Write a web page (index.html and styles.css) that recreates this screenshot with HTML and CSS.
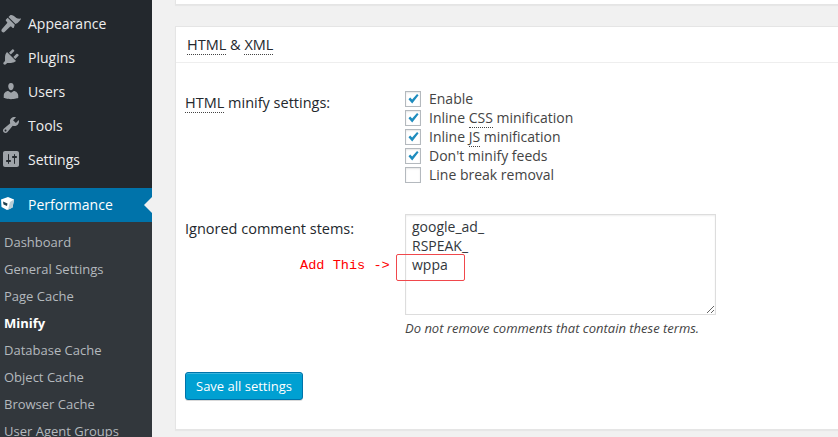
FILE: index.html
```html
<!DOCTYPE html>
<html lang="en">
<head>
  <meta charset="utf-8">
  <title>Minify - Performance</title>
  <link rel="stylesheet" href="styles.css">
</head>
<body>
  <div class="page">
    <nav class="sidebar">
      <ul class="menu">
        <li class="menu-item">
          <svg class="menu-icon" viewBox="0 0 20 20"><path d="M14.500 11 7.500 4l1.500-1.500c.5-.6 2.300-.5 3.500.3 1.200.8 1.500 1.300 2.900 2.100 1.200.6 2.400 1 4.600.6-.1.7-.7 1.600-1.300 2.300-.8 1-1.500 1.500-2.200 2.200zM13.800 11.800 6.700 4.700 5 6.500c-.4.4-.4 1 0 1.400l1 1c.4.4.4 1 0 1.400L1 16c-.8.800-.8 2 0 2.800s2 .8 2.800 0L9 13.800c.4-.4 1-.4 1.400 0l1 1c.4.400 1 .4 1.400 0z"/></svg>
          <span>Appearance</span>
        </li>
        <li class="menu-item">
          <svg class="menu-icon" viewBox="0 0 20 20"><path d="M13.110 4.360 9.870 7.600 8 5.730l3.240-3.240c.35-.34 1.050-.2 1.560.32.52.51.66 1.210.31 1.550zm-8 1.770.91-1.120 9.010 9.010-1.190.84c-.71.71-2.630 1.160-3.820 1.160H6.140L4.900 17.260c-.59.59-1.540.59-2.120 0-.59-.58-.59-1.530 0-2.120l1.240-1.240v-3.880c0-1.130.4-3.190 1.090-3.890zm7.260 3.970 3.240-3.240c.34-.35 1.040-.21 1.550.31.52.51.66 1.210.31 1.550l-3.240 3.250z"/></svg>
          <span>Plugins</span>
        </li>
        <li class="menu-item">
          <svg class="menu-icon" viewBox="0 0 20 20"><path d="M10 9.250c-2.270 0-2.730-3.440-2.730-3.440C7 4.020 7.820 2 9.970 2c2.160 0 2.980 2.020 2.710 3.810 0 0-.41 3.440-2.680 3.440zm0 2.570L12.720 10c2.390 0 4.520 2.330 4.520 4.530v2.490s-3.650 1.130-7.240 1.130c-3.650 0-7.240-1.130-7.240-1.130v-2.490c0-2.250 1.940-4.480 4.470-4.480z"/></svg>
          <span>Users</span>
        </li>
        <li class="menu-item">
          <svg class="menu-icon" viewBox="0 0 20 20"><path d="M16.680 9.770c-1.340 1.340-3.300 1.670-4.950.99l-5.410 6.520c-.99.99-2.590.99-3.580 0s-.99-2.590 0-3.570l6.520-5.420c-.68-1.650-.35-3.610.99-4.950 1.280-1.280 3.120-1.620 4.720-1.060l-2.890 2.890 2.820 2.820 2.860-2.870c.53 1.580.18 3.390-1.080 4.650zM3.810 16.210c.4.39 1.040.39 1.430 0 .4-.4.4-1.040 0-1.430-.39-.4-1.030-.4-1.430 0-.39.39-.39 1.030 0 1.430z"/></svg>
          <span>Tools</span>
        </li>
        <li class="menu-item">
          <svg class="menu-icon" viewBox="0 0 20 20"><path d="M18 16V4c0-1.100-.9-2-2-2H4c-1.100 0-2 .9-2 2v12c0 1.100.9 2 2 2h12c1.100 0 2-.9 2-2zM8 11h1c.55 0 1 .45 1 1s-.45 1-1 1H8v1.500c0 .28-.22.5-.5.5s-.5-.22-.5-.5V13H6c-.55 0-1-.45-1-1s.45-1 1-1h1V5.500c0-.28.22-.5.5-.5s.5.22.5.5V11zm5-2h-1c-.55 0-1-.45-1-1s.45-1 1-1h1V5.500c0-.28.22-.5.5-.5s.5.22.5.5V7h1c.55 0 1 .45 1 1s-.45 1-1 1h-1v5.500c0 .28-.22.5-.5.5s-.5-.22-.5-.5V9z"/></svg>
          <span>Settings</span>
        </li>
        <li class="menu-item menu-current">
          <svg class="cube-icon" viewBox="0 0 15 15"><path class="cube-white" d="M1 3.500 8 1l6 2.500-1.500 8L7 14 1.500 11z"/><path class="cube-shade" d="M10 6 14 3.500l-1.500 8L8 14z"/><path class="cube-dark" d="M3 5.500 7.500 7.500 7 10 3.500 8.500z"/></svg>
          <span>Performance</span>
        </li>
      </ul>
      <ul class="submenu">
        <li>Dashboard</li>
        <li>General Settings</li>
        <li>Page Cache</li>
        <li class="submenu-current">Minify</li>
        <li>Database Cache</li>
        <li>Object Cache</li>
        <li>Browser Cache</li>
        <li>User Agent Groups</li>
      </ul>
    </nav>

    <main class="content">
      <div class="card card-top"></div>
      <section class="card">
        <h3 class="card-title"><abbr>HTML</abbr> &amp; <abbr>XML</abbr></h3>
        <div class="card-body">
          <div class="row row-settings">
            <div class="row-label"><abbr>HTML</abbr> minify settings:</div>
            <div class="checks">
              <label class="check"><span class="box"><svg viewBox="0 0 16 16"><path d="M2.800 8.200 4.800 6.400 7 8.600 12.600 2.200 14.400 3.800 7.100 13z"/></svg></span>Enable</label>
              <label class="check"><span class="box"><svg viewBox="0 0 16 16"><path d="M2.800 8.200 4.800 6.400 7 8.600 12.600 2.200 14.400 3.800 7.100 13z"/></svg></span><span>Inline <abbr>CSS</abbr> minification</span></label>
              <label class="check"><span class="box"><svg viewBox="0 0 16 16"><path d="M2.800 8.200 4.800 6.400 7 8.600 12.600 2.200 14.400 3.800 7.100 13z"/></svg></span><span>Inline <abbr>JS</abbr> minification</span></label>
              <label class="check"><span class="box"><svg viewBox="0 0 16 16"><path d="M2.800 8.200 4.800 6.400 7 8.600 12.600 2.200 14.400 3.800 7.100 13z"/></svg></span>Don't minify feeds</label>
              <label class="check"><span class="box"></span>Line break removal</label>
            </div>
          </div>
          <div class="row row-stems">
            <div class="row-label">Ignored comment stems:</div>
            <div class="stems">
              <textarea class="stems-input" spellcheck="false">google_ad_
RSPEAK_
wppa</textarea>
              <div class="note-box"></div>
              <div class="note-text">Add This -&gt;</div>
              <p class="help">Do not remove comments that contain these terms.</p>
            </div>
          </div>
          <button class="save-btn">Save all settings</button>
        </div>
      </section>
    </main>
  </div>
</body>
</html>
```

FILE: styles.css
```css
html, body {
    margin: 0;
    height: 437px;
    overflow: hidden;
}
body {
    background: #f1f1f1;
    color: #444;
    font-family: "Open Sans", sans-serif;
    font-size: 14px;
}
ul {
    list-style: none;
    margin: 0;
    padding: 0;
}
abbr {
    border-bottom: 1px dotted #444;
}

.page {
    display: flex;
    height: 437px;
}

/* admin menu */
.sidebar {
    width: 152px;
    flex-shrink: 0;
    background: #23282d;
    overflow: hidden;
}
.menu {
    padding-top: 6px;
}
.menu-item {
    display: flex;
    align-items: center;
    height: 34px;
    color: #eee;
    padding-left: 1px;
}
.menu-item span {
    margin-left: 7px;
}
.menu-icon {
    width: 20px;
    height: 20px;
    fill: #9ea3a8;
}
.menu-current {
    position: relative;
    margin-top: 12px;
    padding-left: 0;
    background: #0073aa;
    color: #fff;
}
.menu-current span {
    margin-left: 13px;
    margin-bottom: 2px;
}
.menu-current::after {
    content: "";
    position: absolute;
    right: 0;
    top: 9px;
    border: 8px solid transparent;
    border-left-width: 0;
    border-right-color: #f1f1f1;
}
.cube-icon {
    width: 15px;
    height: 15px;
    margin-bottom: 3px;
}
.cube-white {
    fill: #fff;
}
.cube-shade {
    fill: #b9cdd6;
}
.cube-dark {
    fill: #23424f;
}
.submenu {
    background: #32373c;
    padding-top: 7px;
    height: 220px;
    color: #b4b9be;
    font-size: 13px;
}
.submenu li {
    height: 27px;
    line-height: 27px;
    padding-left: 4px;
    white-space: nowrap;
}
.submenu .submenu-current {
    color: #fff;
    font-weight: 700;
}

/* content */
.content {
    flex: 1;
    padding-left: 23px;
    min-width: 0;
}
.card {
    background: #fff;
    border: 1px solid #e5e5e5;
    border-right: 0;
    box-shadow: 0 1px 1px rgba(0, 0, 0, .04);
}
.card-top {
    height: 4px;
    border-top: 0;
    margin-bottom: 21px;
}
.card-title {
    margin: 0;
    height: 35px;
    line-height: 35px;
    padding-left: 11px;
    border-bottom: 1px solid #eee;
    font-size: 14.5px;
    font-weight: 400;
    color: #23282d;
}
.card-body {
    padding: 26px 9px 29px;
}
.row {
    display: grid;
    grid-template-columns: 220px 1fr;
}
.row-label {
    color: #23282d;
    font-size: 14.5px;
    padding-top: 4px;
}
.row-settings {
    height: 125px;
}
.row-stems {
    height: 158px;
}
.row-stems .row-label {
    padding-top: 5px;
}
.check {
    display: flex;
    align-items: center;
    height: 19px;
}
.box {
    display: block;
    box-sizing: border-box;
    width: 16px;
    height: 16px;
    margin-right: 8px;
    background: #fff;
    border: 1px solid #b4b9be;
    box-shadow: inset 0 1px 2px rgba(0, 0, 0, .1);
}
.box svg {
    display: block;
    width: 14px;
    height: 14px;
    fill: #1e8cbe;
}
.stems {
    position: relative;
}
.stems-input {
    display: block;
    box-sizing: border-box;
    width: 311px;
    height: 101px;
    margin: 0;
    padding: 2px 6px;
    border: 1px solid #ddd;
    box-shadow: inset 0 1px 2px rgba(0, 0, 0, .07);
    color: #32373c;
    font-family: "Open Sans", sans-serif;
    font-size: 14px;
    line-height: 19px;
    outline: 0;
}
.help {
    margin: 4px 0 0;
    font-size: 13px;
    font-style: italic;
    color: #444;
}

/* red annotation drawn on top of the screenshot */
.note-box {
    position: absolute;
    left: -9px;
    top: 40px;
    width: 67px;
    height: 25px;
    border: 1px solid #f0484c;
    border-radius: 2px;
}
.note-text {
    position: absolute;
    left: -105px;
    top: 44px;
    color: #f00;
    font-family: "Liberation Mono", monospace;
    font-size: 13.6px;
    line-height: 16px;
    white-space: nowrap;
}

.save-btn {
    display: block;
    box-sizing: border-box;
    width: 118px;
    height: 28px;
    padding: 0;
    background: #00a0d2;
    border: 1px solid #0073aa;
    border-radius: 3px;
    box-shadow: inset 0 1px 0 rgba(120, 200, 230, .5), 0 1px 0 rgba(0, 0, 0, .15);
    color: #fff;
    font-family: "Open Sans", sans-serif;
    font-size: 13px;
}
```
